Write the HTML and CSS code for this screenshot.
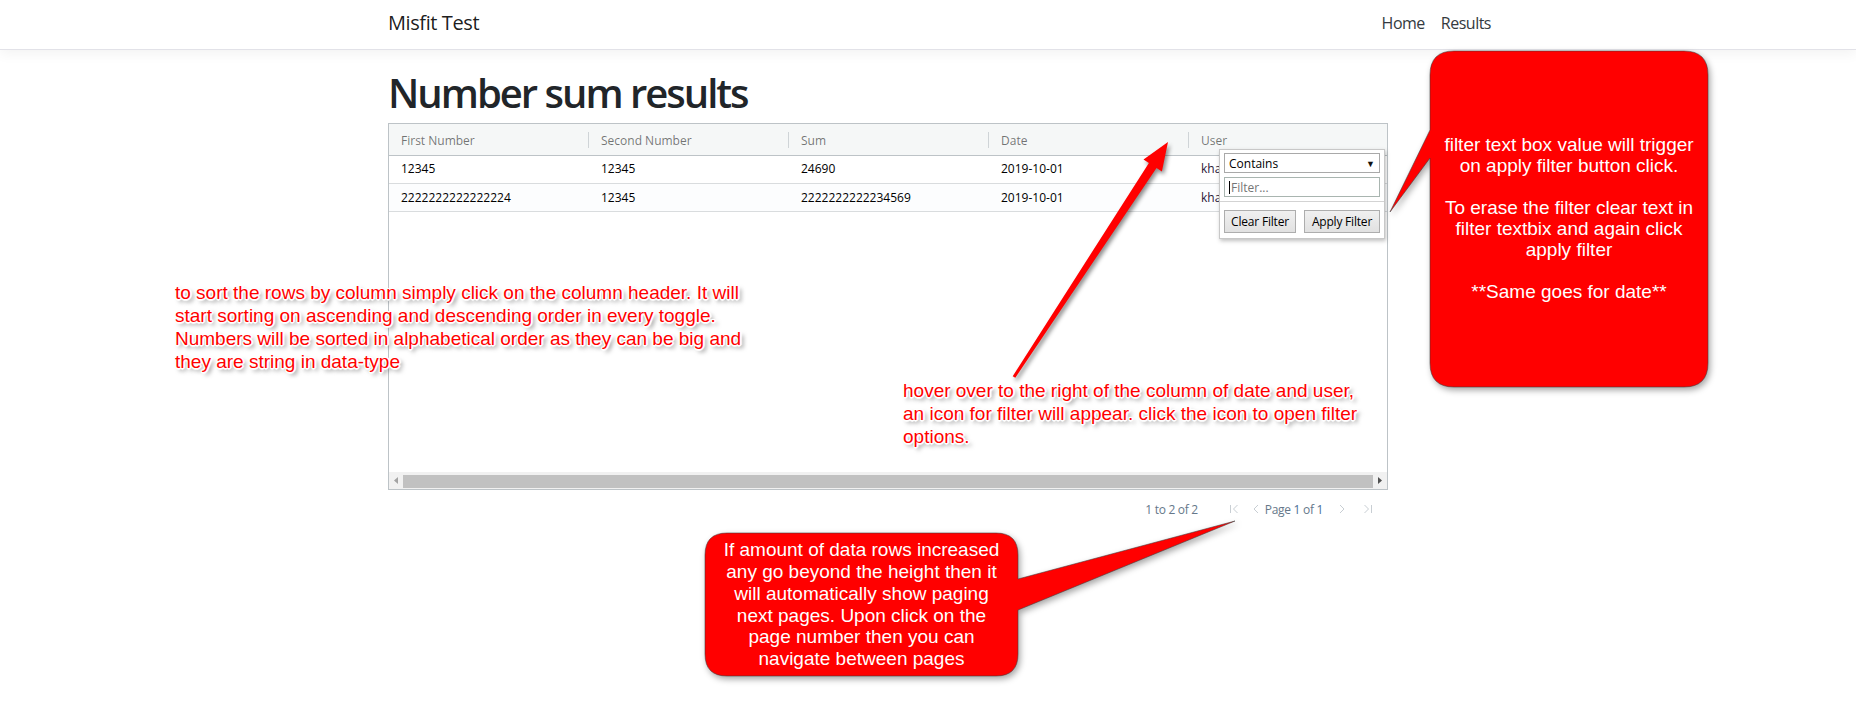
FILE: index.html
```html
<!DOCTYPE html>
<html lang="en">
<head>
<meta charset="utf-8">
<title>Number sum results - Misfit Test</title>
<link rel="stylesheet" href="styles.css">
</head>
<body>
<header class="navbar">
  <div class="nav-inner">
    <a class="brand">Misfit Test</a>
    <nav class="links"><a>Home</a><a>Results</a></nav>
  </div>
</header>

<main class="main">
  <h1>Number sum results</h1>
  <div class="grid">
    <div class="grid-header">
      <div class="hcell">First Number</div>
      <div class="hcell">Second Number</div>
      <div class="hcell">Sum</div>
      <div class="hcell">Date</div>
      <div class="hcell">User</div>
    </div>
    <div class="grid-body">
      <div class="row">
        <div class="cell">12345</div>
        <div class="cell">12345</div>
        <div class="cell">24690</div>
        <div class="cell">2019-10-01</div>
        <div class="cell user">kha</div>
      </div>
      <div class="row alt">
        <div class="cell">2222222222222224</div>
        <div class="cell">12345</div>
        <div class="cell">2222222222234569</div>
        <div class="cell">2019-10-01</div>
        <div class="cell user">kha</div>
      </div>
    </div>
    <div class="hscroll">
      <svg class="sarrow" width="14" height="17" viewBox="0 0 14 17"><path d="M5 8.5 L9 5 V12 Z" fill="#a3a3a3"/></svg>
      <div class="thumb"></div>
      <svg class="sarrow" width="14" height="17" viewBox="0 0 14 17"><path d="M9 8.5 L5 5 V12 Z" fill="#505050"/></svg>
    </div>
  </div>
  <div class="paging">
    <span class="summary">1 to 2 of 2</span>
    <svg class="pbtn first" width="16" height="16" viewBox="0 0 16 16"><path d="M4.5 4 V12 M11.5 4 L7.5 8 L11.5 12" fill="none" stroke="#c8ced3" stroke-width="1"/></svg>
    <svg class="pbtn prev" width="16" height="16" viewBox="0 0 16 16"><path d="M10 4 L6 8 L10 12" fill="none" stroke="#c8ced3" stroke-width="1"/></svg>
    <span class="pages">Page <b class="num">1</b> of <b class="num">1</b></span>
    <svg class="pbtn next" width="16" height="16" viewBox="0 0 16 16"><path d="M6 4 L10 8 L6 12" fill="none" stroke="#c8ced3" stroke-width="1"/></svg>
    <svg class="pbtn last" width="16" height="16" viewBox="0 0 16 16"><path d="M4.5 4 L8.5 8 L4.5 12 M11.5 4 V12" fill="none" stroke="#c8ced3" stroke-width="1"/></svg>
  </div>
</main>

<div class="filter-popup">
  <div class="fselect"><span>Contains</span><span class="fcaret">&#9660;</span></div>
  <div class="finput"><span class="cursor"></span><span class="ph">Filter...</span></div>
  <div class="fsep"></div>
  <div class="fbuttons"><span class="fbtn clear">Clear Filter</span><span class="fbtn apply">Apply Filter</span></div>
</div>

<svg class="overlay" width="1856" height="711" viewBox="0 0 1856 711">
  <path class="callout-shape" d="M1454 51 H1684 Q1708 51 1708 75 V363 Q1708 387 1684 387 H1454 Q1430 387 1430 363 V158 L1390 212 L1430 130 V75 Q1430 51 1454 51 Z"/>
  <path class="callout-shape" d="M727 533 H996 Q1018 533 1018 555 V579 L1235 521 L1018 610 V654 Q1018 676 996 676 H727 Q705 676 705 654 V555 Q705 533 727 533 Z"/>
  <path class="arrow-shape" d="M1012.7 376.2 L1148.9 162.9 L1143.5 159.4 L1168 142 L1161.9 171.4 L1156.5 167.9 L1015.3 377.8 Z"/>
</svg>

<div class="callout-text callout-filter">filter text box value will trigger<br>on apply filter button click.<br><br>To erase the filter clear text in<br>filter textbix and again click<br>apply filter<br><br>**Same goes for date**</div>

<div class="callout-text callout-paging">If amount of data rows increased<br>any go beyond the height then it<br>will automatically show paging<br>next pages. Upon click on the<br>page number then you can<br>navigate between pages</div>

<div class="note note-sort">to sort the rows by column simply click on the column header. It will<br>start sorting on ascending and descending order in every toggle.<br>Numbers will be sorted in alphabetical order as they can be big and<br>they are string in data-type</div>

<div class="note note-filter">hover over to the right of the column of date and user,<br>an icon for filter will appear. click the icon to open filter<br>options.</div>
</body>
</html>
```

FILE: styles.css
```css
* { box-sizing: border-box; }

body {
  margin: 0;
  width: 1856px;
  height: 711px;
  overflow: hidden;
  position: relative;
  background: #fff;
  color: #212529;
  font-family: "Open Sans", "Noto Sans", sans-serif;
}

/* ---------- navbar ---------- */
.navbar {
  height: 50px;
  background: #fff;
  border-bottom: 1px solid #e2e2e8;
  box-shadow: 0 4px 12px rgba(0, 0, 0, 0.05);
}
.nav-inner {
  width: 1110px;
  margin-left: 388px;
  padding-top: 8px;
  height: 38px;
  display: flex;
  align-items: center;
  justify-content: space-between;
}
.brand {
  font-size: 20px;
  line-height: 30px;
  color: rgba(0, 0, 0, 0.9);
  letter-spacing: -0.4px;
}
.links { display: flex; margin-right: -1px; }
.links a {
  font-size: 16px;
  line-height: 24px;
  padding: 0 8px;
  color: #343a40;
  letter-spacing: -0.5px;
}

/* ---------- main ---------- */
.main {
  width: 1110px;
  margin-left: 388px;
  padding-top: 18px;
}
h1 {
  margin: 0 0 7px;
  padding-top: 1px;
  height: 48px;
  font-size: 40px;
  line-height: 48px;
  font-weight: 600;
  letter-spacing: -2px;
  color: #212529;
}

/* ---------- grid ---------- */
.grid {
  width: 1000px;
  height: 367px;
  border: 1px solid #bdc3c7;
  display: flex;
  flex-direction: column;
  overflow: hidden;
  font-size: 12px;
  background: #fff;
}
.grid-header {
  flex: none;
  height: 32px;
  display: flex;
  background: #f5f7f7;
  border-bottom: 1px solid #bdc3c7;
  color: rgba(0, 0, 0, 0.54);
}
.hcell {
  position: relative;
  flex: none;
  width: 200px;
  padding-left: 12px;
  padding-top: 1px;
  line-height: 31px;
  white-space: nowrap;
}
.hcell::after {
  content: "";
  position: absolute;
  right: 0;
  top: 8px;
  width: 1px;
  height: 16px;
  background: #cfd4d7;
}
.grid-body { flex: 1; }
.row {
  height: 28px;
  display: flex;
  border-bottom: 1px solid #d9dcde;
  line-height: 27px;
  padding-top: 1px;
  background: #fff;
}
.row.alt { background: #fcfdfe; padding-top: 2px; }
.cell {
  flex: none;
  width: 200px;
  padding-left: 12px;
  line-height: 24px;
  color: #000;
  white-space: nowrap;
}
.cell.user { color: #2a1838; }
.hscroll {
  flex: none;
  height: 17px;
  display: flex;
  align-items: center;
  background: #f1f1f1;
}
.sarrow { flex: none; }
.thumb {
  flex: 1;
  height: 13px;
  margin-top: 2px;
  background: #c1c1c1;
}

/* ---------- paging ---------- */
.paging {
  width: 1000px;
  height: 32px;
  margin-top: 3px;
  display: flex;
  align-items: center;
  justify-content: flex-end;
  padding-right: 12px;
  font-size: 12px;
  color: #66788a;
  letter-spacing: -0.3px;
}
.summary { margin-right: 28px; }
.pbtn { flex: none; }
.prev { margin-left: 6px; }
.pages { margin: 0 11px 0 1px; }
.num { font-weight: 400; color: #4d6f96; }
.last { margin-left: 10px; }

/* ---------- filter popup ---------- */
.filter-popup {
  position: absolute;
  left: 1219px;
  top: 149px;
  width: 166px;
  height: 90px;
  padding: 3px 4px 4px;
  background: #fff;
  border: 1px solid #c8c8c8;
  box-shadow: 1px 2px 4px rgba(0, 0, 0, 0.25);
  font-size: 12px;
  color: #000;
}
.fselect {
  height: 20px;
  border: 1px solid #a9a9a9;
  display: flex;
  align-items: center;
  justify-content: space-between;
  padding: 1px 4px 0 4px;
  line-height: 18px;
}
.fcaret { font-size: 9px; color: #111; }
.finput {
  margin-top: 4px;
  height: 20px;
  border: 1px solid #a9b5b0;
  display: flex;
  align-items: center;
  padding-left: 4px;
}
.cursor {
  width: 1px;
  height: 13px;
  background: #000;
  margin-right: 1px;
}
.ph { color: #757575; }
.fsep {
  margin: 4px -4px 8px;
  height: 1px;
  background: #d3d3d3;
}
.fbuttons {
  display: flex;
  justify-content: space-between;
}
.fbtn {
  height: 23px;
  line-height: 21px;
  text-align: center;
  border: 1px solid #adadad;
  background: linear-gradient(#f0f0f0, #e1e1e1);
  color: #000;
  letter-spacing: -0.2px;
}
.clear { width: 72px; }
.apply { width: 76px; }

/* ---------- annotations ---------- */
.overlay {
  position: absolute;
  left: 0;
  top: 0;
  pointer-events: none;
}
.callout-shape {
  fill: #ff0000;
  stroke: rgba(60, 60, 60, 0.55);
  stroke-width: 1;
  filter: drop-shadow(2px 3px 3px rgba(0, 0, 0, 0.35));
}
.arrow-shape {
  fill: #ff0000;
  filter: drop-shadow(2px 3px 2px rgba(0, 0, 0, 0.45));
}
.callout-text {
  position: absolute;
  display: flex;
  align-items: center;
  justify-content: center;
  text-align: center;
  white-space: nowrap;
  color: #fff;
  font-family: "Liberation Sans", Arial, sans-serif;
  font-size: 19px;
  line-height: 21px;
}
.callout-filter {
  left: 1430px;
  top: 50px;
  width: 278px;
  height: 336px;
}
.callout-paging {
  left: 705px;
  top: 533px;
  width: 313px;
  height: 143px;
  line-height: 21.7px;
}
.note {
  position: absolute;
  white-space: nowrap;
  color: #ff0000;
  font-family: "Liberation Sans", Arial, sans-serif;
  font-size: 19px;
  line-height: 23px;
  text-shadow:
    1px 0 0 #fff, -1px 0 0 #fff, 0 1px 0 #fff, 0 -1px 0 #fff,
    1px 1px 0 #fff, -1px -1px 0 #fff, 1px -1px 0 #fff, -1px 1px 0 #fff,
    2px 0 1px #fff, 0 2px 1px #fff,
    3px 3px 4px rgba(0, 0, 0, 0.55);
}
.note-sort { left: 175px; top: 281px; }
.note-filter { left: 903px; top: 379px; }
```
